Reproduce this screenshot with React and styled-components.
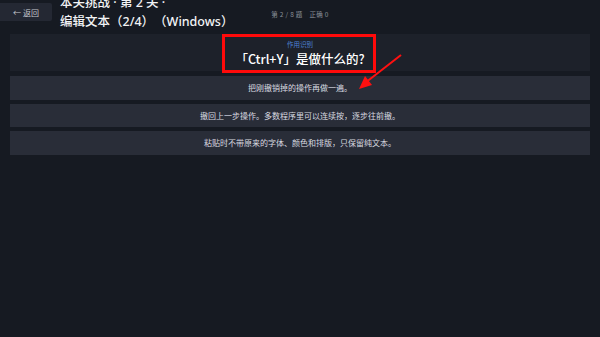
import styled, { createGlobalStyle } from "styled-components";

const GlobalStyle = createGlobalStyle`
  html, body {
    margin: 0;
    padding: 0;
    background: #161a22;
  }
  body {
    font-family: "Noto Sans CJK SC", "Noto Sans", sans-serif;
    color: #e6e8ec;
    text-spacing-trim: space-all;
  }
`;

const options = [
  "把刚撤销掉的操作再做一遍。",
  "撤回上一步操作。多数程序里可以连续按，逐步往前撤。",
  "粘贴时不带原来的字体、颜色和排版，只保留纯文本。",
];

const App = () => {
  return (
    <>
      <GlobalStyle />
      <Page>
        <Header>
          <Left>
            <BackButton>← 返回</BackButton>
            <Title>
              本关挑战 · 第 2 关 ·
              <br />
              编辑文本（2/4）（Windows）
            </Title>
          </Left>
          <Status>第 2 / 8 题　正确 0</Status>
          <div />
        </Header>

        <Main>
          <QuestionCard>
            <Tag>作用识别</Tag>
            <Question>「Ctrl+Y」是做什么的?</Question>
          </QuestionCard>
          <Options>
            {options.map((text) => (
              <Option key={text}>{text}</Option>
            ))}
          </Options>
        </Main>

        {/* annotation overlay */}
        <Highlight />
        <Arrow width="60" height="50" viewBox="0 0 60 50">
          <line x1="53" y1="3" x2="17" y2="31" stroke="#ff1010" strokeWidth="2" />
          <polygon points="11,37 17,24 24,33" fill="#ff1010" />
        </Arrow>
      </Page>
    </>
  );
};

const Page = styled.div`
  position: relative;
  width: 600px;
  height: 337px;
  overflow: hidden;
  background: #161a22;
`;

const Header = styled.header`
  display: grid;
  grid-template-columns: 1fr auto 1fr;
  align-items: flex-start;
  height: 34px;
`;

const Left = styled.div`
  display: flex;
  align-items: flex-start;
  gap: 8px;
`;

const BackButton = styled.button`
  margin-top: 3px;
  width: 52px;
  height: 18px;
  border: none;
  border-radius: 0 2px 2px 0;
  background: #242833;
  color: #c4c7cd;
  font-family: "Noto Sans CJK SC", sans-serif;
  font-size: 8px;
  padding: 0;
  cursor: pointer;
`;

const Title = styled.h1`
  margin: -7px 0 0;
  font-family: "Noto Sans", "Noto Sans CJK SC", sans-serif;
  font-size: 12.5px;
  line-height: 19px;
  font-weight: 500;
  color: #f2f3f5;
  white-space: nowrap;
`;

const Status = styled.div`
  margin-top: 9px;
  font-size: 6.5px;
  color: #8b9099;
  letter-spacing: 0.3px;
  white-space: pre;
`;

const Main = styled.main`
  display: flex;
  flex-direction: column;
  gap: 5px;
  padding: 0 10px;
`;

const QuestionCard = styled.section`
  height: 37px;
  background: #1d212a;
  display: flex;
  flex-direction: column;
  align-items: center;
  justify-content: center;
  gap: 1px;
  padding-top: 2px;
  box-sizing: border-box;
`;

const Tag = styled.div`
  font-size: 6.5px;
  line-height: 9px;
  color: #4d82d6;
`;

const Question = styled.div`
  font-size: 12.5px;
  line-height: 17px;
  font-weight: 500;
  color: #ffffff;
`;

const Options = styled.div`
  display: flex;
  flex-direction: column;
  gap: 4px;
`;

const Option = styled.button`
  height: 23.5px;
  border: none;
  background: #292d38;
  color: #d9dbe0;
  font-family: "Noto Sans CJK SC", sans-serif;
  font-size: 8px;
  padding: 0;
  cursor: pointer;
`;

const Highlight = styled.div`
  position: absolute;
  left: 222px;
  top: 34px;
  width: 154px;
  height: 39px;
  box-sizing: border-box;
  border: 3px solid #ff0a0a;
  pointer-events: none;
`;

const Arrow = styled.svg`
  position: absolute;
  left: 348px;
  top: 52px;
  pointer-events: none;
`;

export default App;
